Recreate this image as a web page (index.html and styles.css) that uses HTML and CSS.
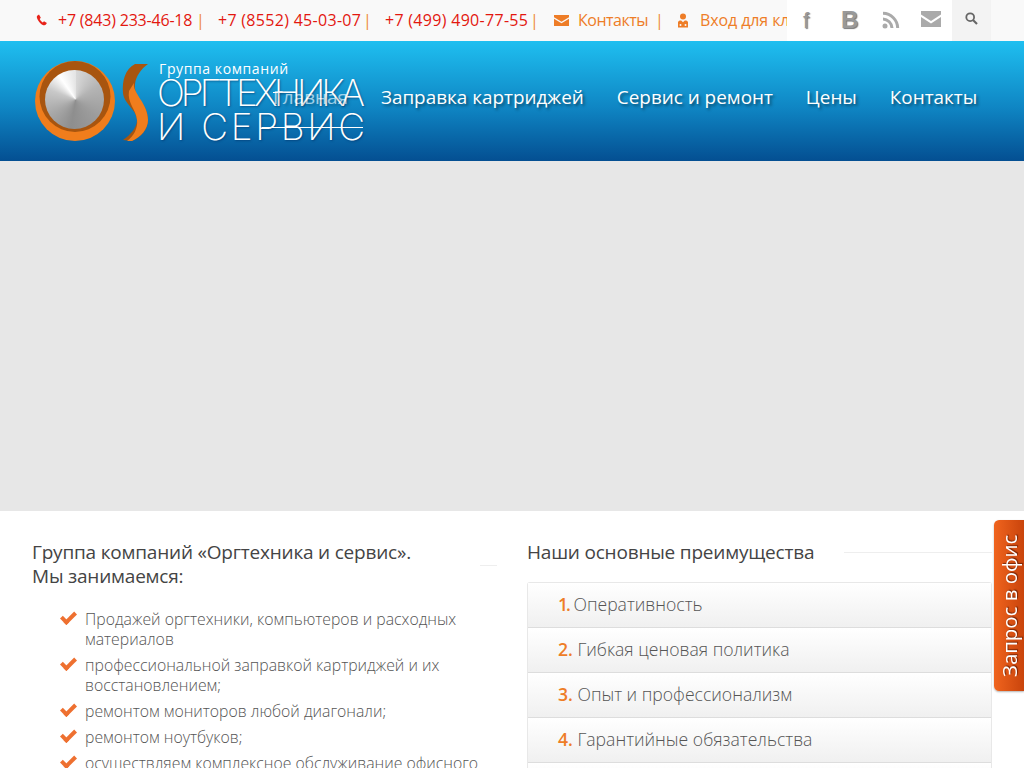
FILE: index.html
```html
<!DOCTYPE html>
<html lang="ru">
<head>
    <meta charset="UTF-8">
    <meta name="viewport" content="width=device-width, initial-scale=1.0">
    <title>Оргтехника и сервис</title>
    <link rel="stylesheet" href="styles.css">
</head>
<body>

    <div class="topbar">
        <div class="contacts">
            <svg class="ic-phone" viewBox="0 0 12 12" width="12" height="12"><path d="M3 .6 1.200 1.700C.5 2.300.7 4 1.900 6c1.400 2.500 3.300 4.500 5.500 5.200 1.100.3 2 .1 2.500-.6l1-1.500-2.900-1.900-1.200 1.200C5.500 7.700 4.300 6.400 3.700 5l1.100-1.200z"/></svg>
            <span class="phone first">+7 (843) 233-46-18</span><span class="sep">|</span>
            <span class="phone">+7 (8552) 45-03-07</span><span class="sep">|</span>
            <span class="phone">+7 (499) 490-77-55</span><span class="sep sep-mail">|</span>
            <svg class="ic-mail" viewBox="0 0 15 11" width="15" height="11"><path d="M0 0h15v2.200L7.500 6.800 0 2.200z"/><path d="M0 3.800 7.500 8.300 15 3.800V11H0z"/></svg>
            <a class="toplink tight">Контакты</a><span class="sep sep-user">|</span>
            <svg class="ic-user" viewBox="0 0 12 15" width="12" height="15"><circle cx="6" cy="3.500" r="3"/><path d="M1 9C2 7.500 3.500 7.300 4.500 7.700L6 9.200l1.500-1.500C8.500 7.300 10 7.500 11 9v5.500H1z"/><circle cx="3.500" cy="12" r="1" fill="#f9f9f9"/><circle cx="8.500" cy="12" r="1" fill="#f9f9f9"/></svg>
            <a class="toplink">Вход для клиентов</a>
        </div>
        <div class="social">
            <span class="soc soc-f">f</span>
            <span class="soc soc-b">B</span>
            <svg class="soc-ic soc-rss" viewBox="0 0 18 18" width="18" height="18"><circle cx="3" cy="15" r="2.500"/><path d="M1 6.500a11 11 0 0 1 10.500 10.500H8.500A8 8 0 0 0 1 9.500z"/><path d="M1 .8A16.500 16.500 0 0 1 17.200 17h-3A13.500 13.500 0 0 0 1 3.800z"/></svg>
            <svg class="soc-ic soc-mail" viewBox="0 0 20 16" width="20" height="16"><path d="M0 0h20v3.500L10 10 0 3.500z"/><path d="M0 6 10 12.500 20 6v10H0z"/></svg>
            <div class="search">
                <svg viewBox="0 0 13 13" width="13" height="13"><circle cx="5.200" cy="5.200" r="3.900" fill="none" stroke="#666" stroke-width="1.800"/><path d="m8 8 4 4" stroke="#666" stroke-width="2.200" fill="none"/></svg>
            </div>
        </div>
    </div>

    <div class="header">
        <div class="logo">
            <div class="logo-mark">
                <svg viewBox="0 0 116 82" width="116" height="82">
                    <circle cx="40" cy="40" r="40" fill="#f07d1c"/>
                    <circle cx="40" cy="35.500" r="35.500" fill="#a8550f"/>
                    <path d="M113 3H100C90 8 87 20 88 32c1 11 14 17 14 27 0 8-7 15-14 20l9 1c9-4 16-12 16-21 0-17-15-22-13-36 1-8 6-15 13-20z" fill="#a8550f"/>
                    <path d="M99 22c-2 10 14 20 14 37 0 9-7 17-16 21h-5c7-5 11-13 10-21-1-11-10-17-8-29z" fill="#f07d1c"/>
                </svg>
                <div class="logo-disc"></div>
            </div>
            <div class="logo-text">
                <div class="logo-sub">Группа компаний</div>
                <div class="logo-line1">ОРГТЕХНИКА</div>
                <div class="logo-line2">И СЕРВИС</div>
                <i class="logo-dash dash1"></i>
                <i class="logo-dash dash2"></i>
            </div>
        </div>
        <div class="nav">
            <a class="nav-item nav-home">Главная</a>
            <a class="nav-item">Заправка картриджей</a>
            <a class="nav-item">Сервис и ремонт</a>
            <a class="nav-item">Цены</a>
            <a class="nav-item">Контакты</a>
        </div>
    </div>

    <div class="slider"></div>

    <div class="content">
        <div class="col-left">
            <h2 class="title-left">Группа компаний «Оргтехника и сервис».<br>Мы занимаемся:</h2>
            <i class="title-rule"></i>
            <ul class="list">
                <li>Продажей оргтехники, компьютеров и расходных материалов</li>
                <li>профессиональной заправкой картриджей и их восстановлением;</li>
                <li>ремонтом мониторов любой диагонали;</li>
                <li>ремонтом ноутбуков;</li>
                <li>осуществляем комплексное обслуживание офисного оборудования</li>
            </ul>
        </div>
        <div class="col-right">
            <div class="title-row">
                <h2 class="title-right">Наши основные преимущества</h2>
                <i class="title-line"></i>
            </div>
            <div class="accordion">
                <div class="acc-row"><b>1.</b> Оперативность</div>
                <div class="acc-row"><b>2.</b> Гибкая ценовая политика</div>
                <div class="acc-row"><b>3.</b> Опыт и профессионализм</div>
                <div class="acc-row"><b>4.</b> Гарантийные обязательства</div>
                <div class="acc-row"><b>5.</b> Индивидуальный подход</div>
            </div>
        </div>
    </div>

    <a class="side-tab">Запрос в офис</a>

</body>
</html>
```
FILE: styles.css
```css
html, body {
    height: 768px;
    overflow: hidden;
}

body {
    font-family: 'Open Sans', sans-serif;
    background-color: #fff;
    margin: 0;
    padding: 0;
    color: #555;
}

.topbar {
    height: 41px;
    background-color: #f9f9f9;
    position: relative;
    overflow: hidden;
}

.contacts {
    display: flex;
    align-items: center;
    height: 40px;
    padding-left: 36px;
    white-space: nowrap;
    font-size: 16px;
}

.ic-phone {
    fill: #e8231a;
    margin-right: 10px;
}

.phone {
    color: #e3170f;
    font-weight: 500;
    width: 141px;
    letter-spacing: 0.3px;
}

.phone.first {
    width: 134px;
    letter-spacing: -0.2px;
}

.sep {
    color: #ee8a3c;
    width: 4px;
    margin: 0 18px 0 4px;
}

.sep-mail {
    margin-right: 20px;
}

.sep-user {
    margin: 0 18px 0 7px;
}

.ic-mail, .ic-user {
    fill: #ee7d27;
    margin-right: 9px;
}

.ic-user {
    margin-right: 11px;
}

.toplink {
    color: #ee7d27;
    letter-spacing: -0.1px;
}

.toplink.tight {
    letter-spacing: -0.5px;
}

.social {
    position: absolute;
    top: 0;
    left: 787px;
    width: 204px;
    height: 41px;
    background-color: #fff;
}

.soc {
    position: absolute;
    font-family: 'Liberation Sans', sans-serif;
    font-weight: bold;
    color: #999;
    text-shadow: 1px 1px 1px #777;
    line-height: 1;
}

.soc-f {
    font-size: 22px;
    left: 16px;
    top: 10px;
    font-weight: normal;
}

.soc-b {
    font-size: 24px;
    left: 54px;
    top: 8px;
}

.soc-ic {
    position: absolute;
    fill: #aaa;
}

.soc-rss {
    left: 95px;
    top: 11px;
}

.soc-mail {
    left: 134px;
    top: 11px;
}

.search {
    position: absolute;
    left: 165px;
    top: 0;
    width: 39px;
    height: 41px;
    background-color: #f3f3f3;
    display: flex;
    justify-content: center;
    padding-top: 12px;
    box-sizing: border-box;
}

.header {
    height: 120px;
    background: linear-gradient(to bottom, #1fbff0 0%, #0f86c4 55%, #044f92 100%);
    position: relative;
}

.logo {
    position: absolute;
    left: 35px;
    top: 20px;
    display: flex;
}

.logo-mark {
    position: relative;
    width: 116px;
    height: 82px;
}

.logo-disc {
    position: absolute;
    left: 10px;
    top: 9px;
    width: 59px;
    height: 59px;
    border-radius: 50%;
    background: conic-gradient(from 0deg at 52% 50%, #d8d8d8 0deg, #b4b4b4 60deg, #9c9c9c 130deg, #8e8e8e 190deg, #a8a8a8 240deg, #c8c8c8 290deg, #fff 325deg, #e4e4e4 360deg);
}

.logo-text {
    position: relative;
    margin-left: 8px;
    color: #fff;
    width: 210px;
}

.logo-sub {
    font-size: 14px;
    line-height: 15px;
    letter-spacing: 0.6px;
}

.logo-line1, .logo-line2 {
    font-family: 'Inter', sans-serif;
    font-weight: 200;
    font-size: 37px;
    line-height: 34px;
    margin-left: -2px;
    white-space: nowrap;
    text-shadow: 1px 1px 2px rgba(0, 40, 90, 0.5);
}

.logo-line1 {
    letter-spacing: -4px;
}

.logo-line2 {
    letter-spacing: 2.700px;
}

.logo-dash {
    position: absolute;
    height: 1px;
    background-color: #fff;
}

.dash1 {
    left: 114px;
    top: 31px;
    width: 24px;
}

.dash2 {
    left: 103px;
    top: 66px;
    width: 101px;
}

.nav {
    display: flex;
    height: 112px;
    align-items: center;
    padding-left: 273px;
    gap: 33px;
    white-space: nowrap;
}

.nav-item {
    color: #fff;
    font-size: 18.900px;
    text-shadow: 2px 2px 3px rgba(0, 0, 0, 0.45);
}

.nav-home {
    opacity: 0.6;
}

.slider {
    height: 350px;
    background-color: #e7e7e7;
}

.content {
    display: flex;
    padding: 29px 32px 0;
    gap: 30px;
}

.col-left {
    width: 465px;
    position: relative;
}

.col-right {
    width: 465px;
}

h2 {
    margin: 0;
    font-weight: 400;
    font-size: 19px;
    line-height: 24px;
    letter-spacing: -0.2px;
    color: #444;
}

.title-rule {
    position: absolute;
    right: 0;
    top: 25px;
    width: 17px;
    height: 1px;
    background-color: #eee;
}

.list {
    list-style: none;
    margin: 21px 0 0;
    padding: 0 0 0 53px;
}

.list li {
    position: relative;
    font-size: 15.800px;
    font-weight: 300;
    line-height: 20px;
    margin-bottom: 6px;
}

.list li::before {
    content: "";
    position: absolute;
    left: -24px;
    top: 3px;
    width: 11px;
    height: 5px;
    border-left: 4px solid #ee7030;
    border-bottom: 4px solid #ee7030;
    transform: rotate(-45deg);
}

.title-row {
    display: flex;
    align-items: center;
}

.title-line {
    flex: 1;
    height: 1px;
    background-color: #eee;
    margin-left: 30px;
}

.accordion {
    margin-top: 18px;
    border: 1px solid #e8e8e8;
    border-radius: 3px 3px 0 0;
    border-bottom: none;
}

.acc-row {
    height: 44px;
    line-height: 42px;
    padding-left: 30px;
    font-size: 17.600px;
    font-weight: 300;
    border-bottom: 1px solid #ddd;
    background: linear-gradient(to bottom, #fff 0%, #f0f0f0 100%);
}

.acc-row b {
    color: #ee7d27;
    font-weight: 600;
}

.acc-row:first-child b {
    letter-spacing: -2px;
}

.side-tab {
    position: fixed;
    right: 0;
    top: 520px;
    width: 30px;
    height: 171px;
    display: flex;
    align-items: center;
    justify-content: center;
    background: linear-gradient(to left, #f0641e, #c9440c);
    border-radius: 0 5px 5px 0;
    color: #fff;
    font-size: 20.400px;
    writing-mode: vertical-rl;
    transform: rotate(180deg);
    text-shadow: 1px 1px 1px rgba(80, 20, 0, 0.7);
    box-shadow: 0 -1px 2px rgba(0, 0, 0, 0.3);
}
```
